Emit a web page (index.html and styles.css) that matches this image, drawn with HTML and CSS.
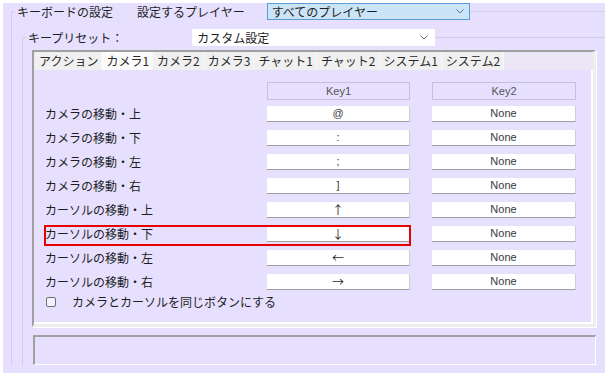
FILE: index.html
```html
<!DOCTYPE html>
<html lang="ja">
<head>
    <meta charset="UTF-8">
    <meta name="viewport" content="width=device-width, initial-scale=1.0">
    <title>キーボードの設定</title>
    <link rel="stylesheet" href="styles.css">
</head>
<body>

    <div class="window">
        <!-- Keyboard settings group -->
        <fieldset class="group group-main">
            <legend class="group-title">
                <span class="title-text">キーボードの設定</span>
                <span class="player-label">設定するプレイヤー</span>
                <div class="select select-player">
                    <span>すべてのプレイヤー</span>
                    <svg class="chevron" width="8" height="5" viewBox="0 0 8 5"><polyline points="0.5,0.5 4,4 7.5,0.5" fill="none" stroke="#707070" stroke-width="1"/></svg>
                </div>
            </legend>

            <!-- Key preset group -->
            <fieldset class="group group-preset">
                <legend class="group-title">
                    <span class="preset-label">キープリセット：</span>
                    <div class="select select-preset">
                        <span>カスタム設定</span>
                        <svg class="chevron" width="8" height="5" viewBox="0 0 8 5"><polyline points="0.5,0.5 4,4 7.5,0.5" fill="none" stroke="#707070" stroke-width="1"/></svg>
                    </div>
                </legend>

                <div class="tabs">
                    <div class="tab-strip">
                        <div class="tab">アクション</div>
                        <div class="tab active">カメラ1</div>
                        <div class="tab">カメラ2</div>
                        <div class="tab">カメラ3</div>
                        <div class="tab">チャット1</div>
                        <div class="tab">チャット2</div>
                        <div class="tab">システム1</div>
                        <div class="tab">システム2</div>
                    </div>

                    <div class="tab-panel">
                        <div class="key-head">
                            <div class="head-cell">Key1</div>
                            <div class="head-cell key2">Key2</div>
                        </div>

                        <div class="key-grid">
                            <div class="key-label">カメラの移動・上</div>
                            <div class="key-box latin">@</div>
                            <div class="key-box latin">None</div>

                            <div class="key-label">カメラの移動・下</div>
                            <div class="key-box latin">:</div>
                            <div class="key-box latin">None</div>

                            <div class="key-label">カメラの移動・左</div>
                            <div class="key-box latin">;</div>
                            <div class="key-box latin">None</div>

                            <div class="key-label">カメラの移動・右</div>
                            <div class="key-box latin">]</div>
                            <div class="key-box latin">None</div>

                            <div class="key-label">カーソルの移動・上</div>
                            <div class="key-box">↑</div>
                            <div class="key-box latin">None</div>

                            <div class="key-label">カーソルの移動・下</div>
                            <div class="key-box">↓</div>
                            <div class="key-box latin">None</div>

                            <div class="key-label">カーソルの移動・左</div>
                            <div class="key-box">←</div>
                            <div class="key-box latin">None</div>

                            <div class="key-label">カーソルの移動・右</div>
                            <div class="key-box">→</div>
                            <div class="key-box latin">None</div>
                        </div>

                        <div class="option">
                            <span class="checkbox"></span>
                            <span>カメラとカーソルを同じボタンにする</span>
                        </div>

                        <!-- red annotation frame -->
                        <div class="highlight"></div>
                    </div>
                </div>

                <div class="status-box"></div>
            </fieldset>
        </fieldset>
    </div>

</body>
</html>
```

FILE: styles.css
```css
body {
    margin: 0;
    background-color: #ffffff;
    font-family: "Noto Sans CJK JP", "Noto Sans", sans-serif;
    font-size: 12px;
    color: #1e1e1e;
}

.window {
    width: 602px;
    margin: 3px 0 0 3px;
    padding: 0 0 8px 8px;
    box-sizing: border-box;
    background-color: #e6e0fe;
}

/* Group boxes: only top and left edges show */
.group {
    margin: 0;
    padding: 0;
    min-width: 0;
    border: none;
    border-top: 1px solid #d3cce8;
    border-left: 1px solid #d3cce8;
}

.group-main {
    margin-top: 1px;
}

.group-preset {
    margin: 9px 0 0 10px;
}

.group-title {
    display: flex;
    align-items: center;
    margin-left: 3px;
    padding: 0 0 0 2px;
    height: 17px;
    line-height: 17px;
}

.title-text {
    margin-right: 24px;
}

.player-label {
    margin-right: 22px;
}

.preset-label {
    margin-right: 69px;
}

.select {
    display: flex;
    align-items: center;
    justify-content: space-between;
    height: 17px;
    box-sizing: border-box;
    padding: 0 5px 0 4px;
}

.select-player {
    width: 203px;
    background-color: #cce4f7;
    border: 1px solid #5b9bd5;
}

.select-preset {
    width: 243px;
    background-color: #ffffff;
    padding-left: 5px;
    padding-right: 7px;
}

/* Tab control */
.tabs {
    margin: 4px 9px 0 9px;
    border-top: 2px solid #a0a0a0;
    border-left: 2px solid #a0a0a0;
    border-right: 3px solid #eeeeee;
    border-bottom: 3px solid #eeeeee;
    box-shadow: 1px 1px 0 #ffffff;
}

.tab-strip {
    display: flex;
    height: 18px;
    padding-left: 1px;
    background-color: #ebe7f7;
}

.tab {
    padding: 0 3px 0 4px;
    line-height: 18px;
    background-color: #f0f0f0;
    border-right: 1px solid #f8f8f8;
    color: #2a2a2a;
}

.tab.active {
    background-color: #fbfbfb;
}

.tab-panel {
    position: relative;
    height: 254px;
    box-sizing: border-box;
    padding: 12px 0 0 11px;
    background-color: #e6e0fe;
    border-right: 2px solid #ffffff;
    border-bottom: 2px solid #ffffff;
}

.key-head {
    display: flex;
    gap: 22px;
    padding-left: 222px;
}

.head-cell {
    width: 143px;
    height: 18px;
    box-sizing: border-box;
    border: 1px solid #c6c1d6;
    text-align: center;
    line-height: 16px;
    font-family: "Liberation Sans", Arial, sans-serif;
    font-size: 11px;
    color: #555555;
}

.head-cell.key2 {
    width: 144px;
}

.key-grid {
    display: grid;
    grid-template-columns: 200px 143px 144px;
    grid-auto-rows: 16px;
    column-gap: 22px;
    row-gap: 8px;
    margin-top: 6px;
}

.key-label {
    line-height: 16px;
}

.key-box {
    background-color: #ffffff;
    border-bottom: 1px solid #a0a0a0;
    border-right: 1px solid #cfcfcf;
    box-sizing: border-box;
    text-align: center;
    line-height: 15px;
    color: #2a2a2a;
}

.key-box.latin {
    font-family: "Liberation Sans", Arial, sans-serif;
    font-size: 11px;
    color: #3a3a3a;
}

.option {
    display: flex;
    align-items: center;
    margin: 5px 0 0 1px;
    line-height: 14px;
}

.checkbox {
    width: 10px;
    height: 10px;
    box-sizing: border-box;
    border: 1px solid #707070;
    border-radius: 2px;
    background-color: #f4f2fc;
    margin-right: 16px;
}

.highlight {
    position: absolute;
    left: 10px;
    top: 155px;
    width: 367px;
    height: 21px;
    box-sizing: border-box;
    border: 2px solid #e60000;
}

.status-box {
    margin: 8px 9px 0 10px;
    height: 30px;
    box-sizing: border-box;
    border-top: 2px solid #a0a0a0;
    border-left: 2px solid #a0a0a0;
    border-right: 1px solid #ffffff;
    border-bottom: 1px solid #ffffff;
}
```
